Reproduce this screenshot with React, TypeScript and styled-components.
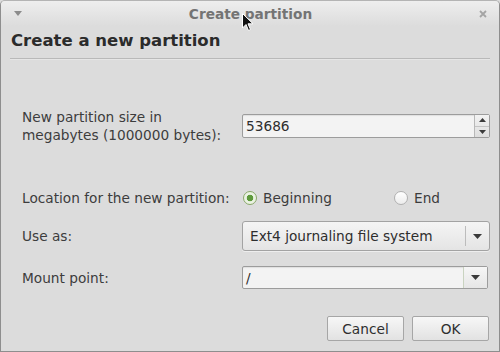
import React from "react";
import styled, { createGlobalStyle } from "styled-components";

const GlobalStyle = createGlobalStyle`
  html, body {
    margin: 0;
    padding: 0;
    background: #dcdcdc;
  }
  body {
    font-family: "DejaVu Sans", "Liberation Sans", sans-serif;
    font-size: 13.7px;
    color: #3c3c3c;
  }
`;

const Window = styled.div`
  position: relative;
  box-sizing: border-box;
  width: 500px;
  height: 352px;
  background: #dcdcdc;
  border: 1px solid #8e8e8e;
  border-top-color: #b4b4b4;
  border-radius: 5px 5px 0 0;
  display: flex;
  flex-direction: column;
  overflow: hidden;
`;

const TitleBar = styled.div`
  height: 25px;
  flex: none;
  display: flex;
  align-items: center;
  justify-content: space-between;
  padding: 0 11px 0 12px;
  background: linear-gradient(#eeeeee, #dcdcdc);
`;

const TitleText = styled.div`
  font-weight: bold;
  color: #747474;
  font-size: 13.7px;
`;

const TitleIcon = styled.span`
  width: 10px;
  display: flex;
  justify-content: center;
  color: #9a9a9a;
`;

const Body = styled.div`
  flex: 1;
  display: flex;
  flex-direction: column;
  padding: 0 9px 0 9px;
`;

const Heading = styled.h1`
  margin: 5px 0 0 1px;
  font-size: 16.5px;
  font-weight: bold;
  color: #2b2b2b;
  line-height: 20px;
`;

const Separator = styled.div`
  margin-top: 7px;
  height: 1px;
  background: #b9b9b9;
  border-bottom: 1px solid #e6e6e6;
`;

const Row = styled.div<{ $top: number; $height: number }>`
  display: grid;
  grid-template-columns: 220px 1fr;
  align-items: center;
  margin-top: ${(p) => p.$top}px;
  height: ${(p) => p.$height}px;
  padding-left: 12px;
`;

const Label = styled.div`
  line-height: 18px;
  color: #3d3d3d;
`;

const Entry = styled.div<{ $height: number; $trim?: number }>`
  box-sizing: border-box;
  height: ${(p) => p.$height}px;
  margin-right: ${(p) => p.$trim ?? 0}px;
  display: flex;
  align-items: stretch;
  background: #f3f3f3;
  border: 1px solid #9c9c9c;
  border-radius: 2px;
  box-shadow: inset 0 1px 1px rgba(0, 0, 0, 0.08);
`;

const EntryText = styled.div<{ $pad: number }>`
  flex: 1;
  display: flex;
  align-items: center;
  padding-left: ${(p) => p.$pad}px;
  color: #2e2e2e;
`;

const SpinButtons = styled.div`
  width: 14px;
  display: flex;
  flex-direction: column;
  border-left: 1px solid #b8b8b8;
  background: linear-gradient(#f2f2f2, #dedede);
`;

const SpinHalf = styled.div`
  flex: 1;
  display: flex;
  align-items: center;
  justify-content: center;
  & + & {
    border-top: 1px solid #c4c4c4;
  }
`;

const Radios = styled.div`
  display: flex;
  align-items: center;
`;

const RadioOption = styled.label<{ $width: number }>`
  display: flex;
  align-items: center;
  width: ${(p) => p.$width}px;
  gap: 6px;
`;

const RadioCircle = styled.span<{ $checked?: boolean }>`
  box-sizing: border-box;
  width: 14px;
  height: 14px;
  border-radius: 50%;
  border: 1px solid ${(p) => (p.$checked ? "#8aa86a" : "#b0b0b0")};
  background: ${(p) =>
    p.$checked
      ? "radial-gradient(circle, #5e9a3c 0 3px, #eaf2e2 3.6px)"
      : "linear-gradient(#ffffff, #ececec)"};
  margin-left: 1px;
`;

const ComboButton = styled.div`
  box-sizing: border-box;
  height: 30px;
  display: flex;
  align-items: center;
  background: linear-gradient(#f5f5f5, #e4e4e4);
  border: 1px solid #a3a3a3;
  border-radius: 3px;
  box-shadow: 0 1px 0 rgba(255, 255, 255, 0.5);
  color: #2e2e2e;
`;

const ComboText = styled.div`
  flex: 1;
  padding-left: 7px;
`;

const ComboDivider = styled.div`
  width: 1px;
  align-self: stretch;
  margin: 4px 0;
  background: #bcbcbc;
`;

const ComboArrow = styled.div<{ $width: number }>`
  width: ${(p) => p.$width}px;
  display: flex;
  align-items: center;
  justify-content: center;
  align-self: stretch;
`;

const EntryArrow = styled(ComboArrow)`
  border-left: 1px solid #c9d3c0;
  background: linear-gradient(#f6f6f6, #e6e6e6);
`;

const Actions = styled.div`
  margin-top: auto;
  margin-bottom: 10px;
  display: flex;
  justify-content: flex-end;
  gap: 8px;
  padding-right: 1px;
`;

const Button = styled.button`
  box-sizing: border-box;
  width: 77px;
  height: 25px;
  font-family: "DejaVu Sans", "Liberation Sans", sans-serif;
  font-size: 13.7px;
  color: #2e2e2e;
  background: linear-gradient(#f7f7f7, #e2e2e2);
  border: 1px solid #a6a6a6;
  border-radius: 2px;
  padding: 0;
`;

const Cursor = styled.svg`
  position: absolute;
  left: 241px;
  top: 12px;
`;

const Arrow = ({ up, size = 4 }: { up?: boolean; size?: number }) => (
  <svg width={size * 2 + 1} height={size + 1} viewBox={`0 0 ${size * 2 + 1} ${size + 1}`}>
    <polygon
      points={
        up
          ? `0,${size + 1} ${size + 0.5},0 ${size * 2 + 1},${size + 1}`
          : `0,0 ${size * 2 + 1},0 ${size + 0.5},${size + 1}`
      }
      fill="#3a3a3a"
    />
  </svg>
);

export default function App() {
  return (
    <>
      <GlobalStyle />
      <Window>
        <TitleBar>
          <TitleIcon>
            <svg width="8" height="5" viewBox="0 0 8 5">
              <polygon points="0,0 8,0 4,5" fill="#8c8c8c" />
            </svg>
          </TitleIcon>
          <TitleText>Create partition</TitleText>
          <TitleIcon>
            <svg width="8" height="8" viewBox="0 0 8 8">
              <path d="M1 1 L7 7 M7 1 L1 7" stroke="#a4a4a4" strokeWidth="1.8" />
            </svg>
          </TitleIcon>
        </TitleBar>
        <Body>
          <Heading>Create a new partition</Heading>
          <Separator />

          <Row $top={45} $height={42}>
            <Label>
              New partition size in
              <br />
              megabytes (1000000 bytes):
            </Label>
            <Entry $height={24}>
              <EntryText $pad={3}>53686</EntryText>
              <SpinButtons>
                <SpinHalf>
                  <Arrow up size={3} />
                </SpinHalf>
                <SpinHalf>
                  <Arrow size={3} />
                </SpinHalf>
              </SpinButtons>
            </Entry>
          </Row>

          <Row $top={39} $height={24}>
            <Label>Location for the new partition:</Label>
            <Radios>
              <RadioOption $width={151}>
                <RadioCircle $checked />
                Beginning
              </RadioOption>
              <RadioOption $width={80}>
                <RadioCircle />
                End
              </RadioOption>
            </Radios>
          </Row>

          <Row $top={11} $height={30}>
            <Label>Use as:</Label>
            <ComboButton>
              <ComboText>Ext4 journaling file system</ComboText>
              <ComboDivider />
              <ComboArrow $width={23}>
                <Arrow size={4} />
              </ComboArrow>
            </ComboButton>
          </Row>

          <Row $top={15} $height={23}>
            <Label>Mount point:</Label>
            <Entry $height={23} $trim={2}>
              <EntryText $pad={3}>/</EntryText>
              <EntryArrow $width={23}>
                <Arrow size={4} />
              </EntryArrow>
            </Entry>
          </Row>

          <Actions>
            <Button>Cancel</Button>
            <Button>OK</Button>
          </Actions>
        </Body>
        <Cursor width="12" height="19" viewBox="0 0 12 19">
          <path
            d="M0.5 0.5 L0.5 15 L4 11.5 L6.5 17.5 L8.5 16.5 L6 10.8 L11 10.8 Z"
            fill="#111"
            stroke="#fff"
            strokeWidth="1"
          />
        </Cursor>
      </Window>
    </>
  );
}
